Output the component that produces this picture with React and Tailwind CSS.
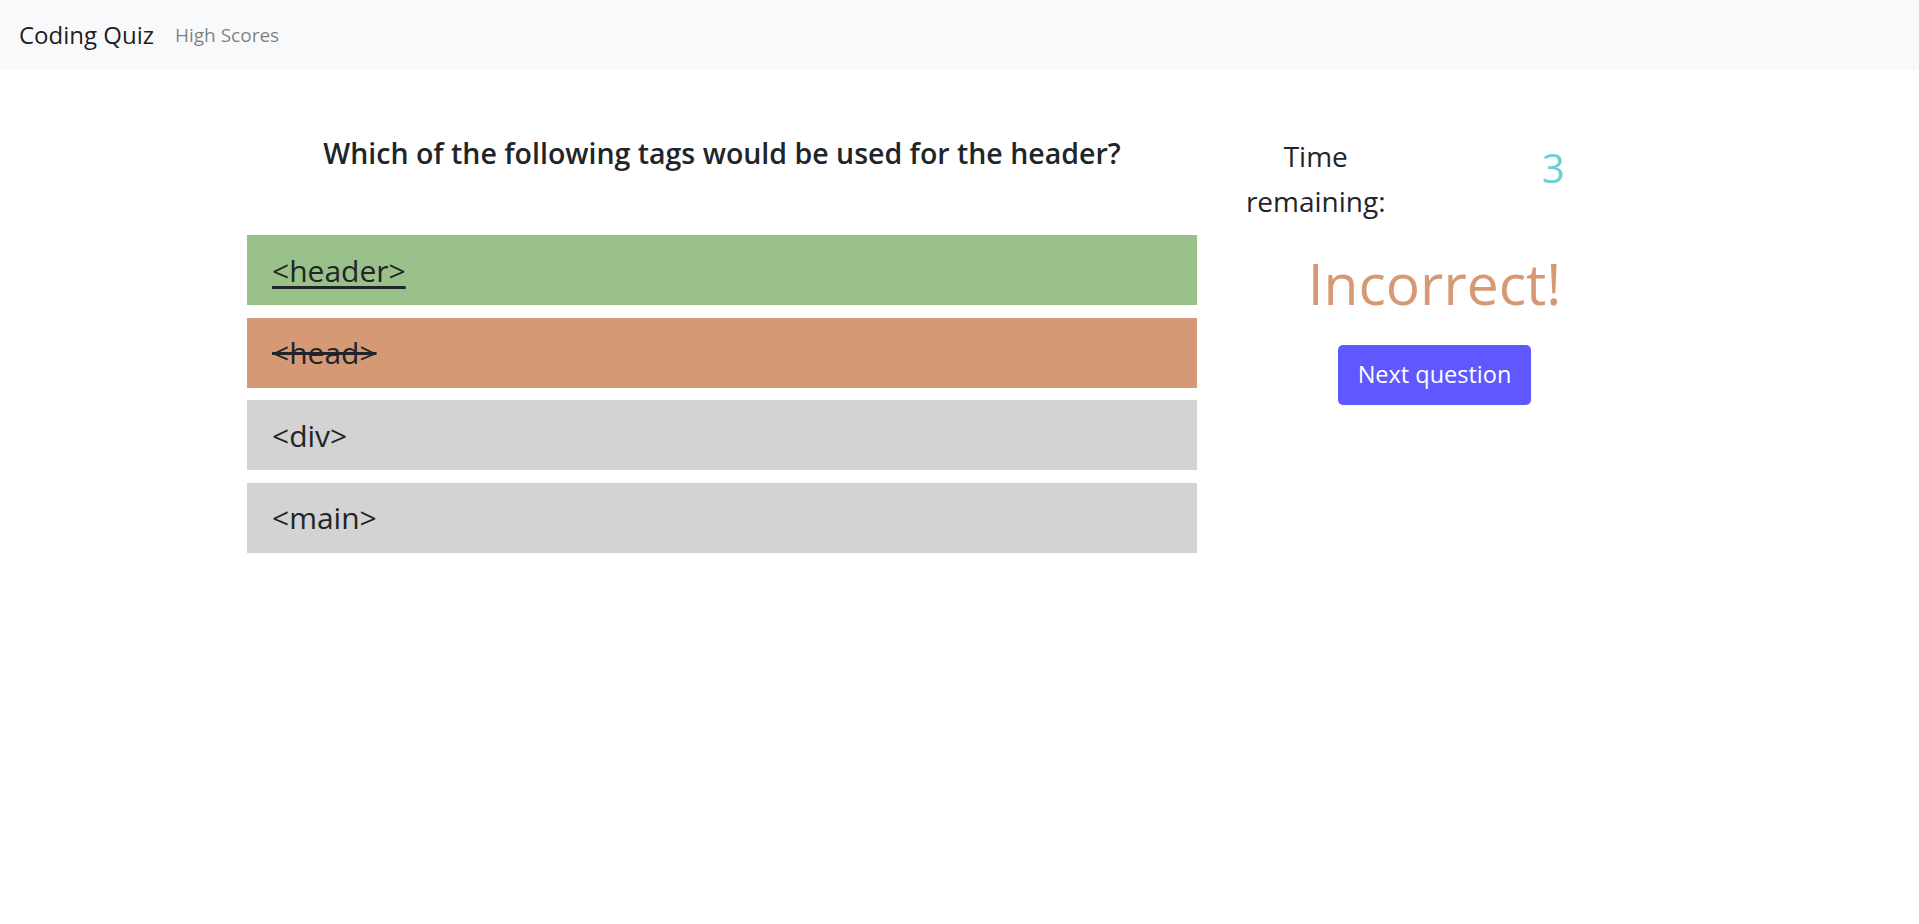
import { useState } from 'react';

const answers = [
    { text: '<header>', state: 'correct' },
    { text: '<head>', state: 'wrong' },
    { text: '<div>', state: 'idle' },
    { text: '<main>', state: 'idle' },
];

const boxStyles = {
    correct: 'bg-[#9ac18a] underline decoration-[3px] underline-offset-[4px]',
    wrong: 'bg-[#d69975] line-through decoration-[3px]',
    idle: 'bg-[#d3d3d3]',
};

const App = () => {
    const [timeLeft] = useState(3);

    return (
        <div className="min-h-screen bg-white text-[#212529] font-['Open_Sans','Noto_Sans',sans-serif]">
            <nav className="h-[70px] bg-[#f8f9fa] flex items-center px-[19px]">
                <a className="text-[24px] text-black/90 mr-[21px] leading-none">Coding Quiz</a>
                <a className="text-[19px] text-black/50 leading-none">High Scores</a>
            </nav>

            <div className="w-[1425px] mx-auto flex">
                <div className="w-[950px]">
                    <h4 className="text-center text-[28.5px] font-semibold leading-[36px] pt-[65px] pb-[64px]">
                        Which of the following tags would be used for the header?
                    </h4>
                    <div className="flex flex-col gap-[12.67px]">
                        {answers.map((answer) => (
                            <div
                                key={answer.text}
                                className={`h-[70px] flex items-center pl-[25px] text-[30px] ${boxStyles[answer.state]}`}
                            >
                                {answer.text}
                            </div>
                        ))}
                    </div>
                </div>

                <div className="w-[475px]">
                    <div className="flex pt-[64px]">
                        <div className="w-1/2 text-center text-[28px] leading-[45px]">
                            Time
                            <br />
                            remaining:
                        </div>
                        <div className="w-1/2 text-center text-[40px] leading-[48px] text-[#6ccfd6] pt-[10px]">
                            {timeLeft}
                        </div>
                    </div>
                    <div className="text-center text-[57px] leading-[70px] text-[#d69975] mt-[24px]">
                        Incorrect!
                    </div>
                    <div className="flex justify-center mt-[27px]">
                        <button className="h-[60px] px-[20px] rounded-[5px] bg-[#5f58ff] text-white text-[23.5px]">
                            Next question
                        </button>
                    </div>
                </div>
            </div>
        </div>
    );
};

export default App;
